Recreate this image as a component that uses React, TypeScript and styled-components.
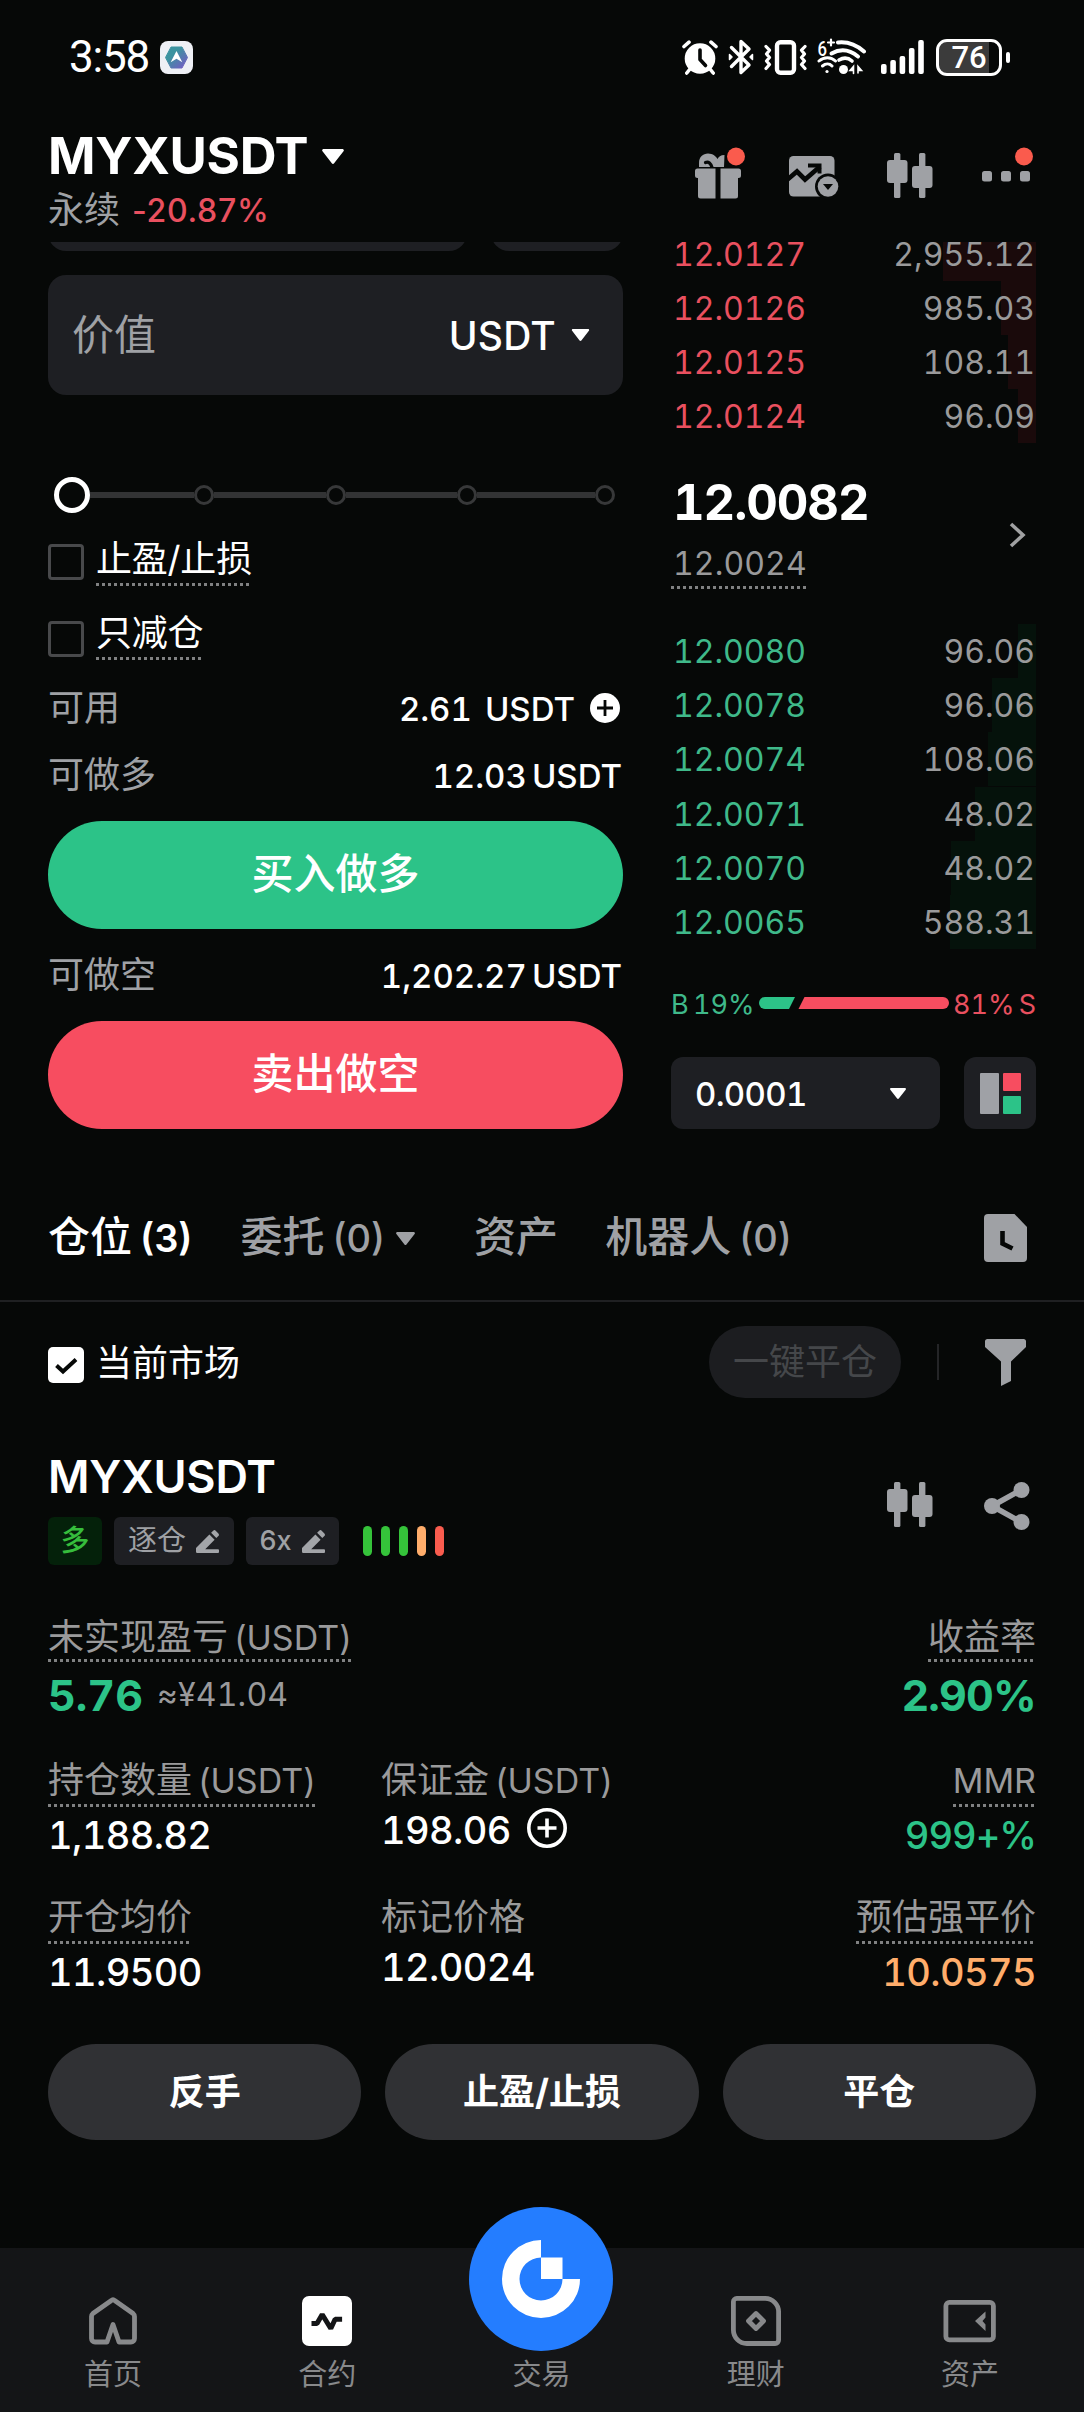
import React from "react";
import styled, { createGlobalStyle } from "styled-components";

const c = {
  bg: "#060807",
  panel: "#1e1f23",
  grey: "#9fa1a5",
  dim: "#9a9a9b",
  red: "#f74d60",
  redText: "#e9505f",
  green: "#2cc388",
  greenText: "#3fb98a",
  white: "#ffffff",
};

const Global = createGlobalStyle`
  * { box-sizing: border-box; }
  html, body { margin: 0; padding: 0; background: ${c.bg}; }
  body {
    font-family: Inter, "Noto Sans CJK SC", sans-serif;
    color: ${c.white};
    font-size: 36px;
    -webkit-font-smoothing: antialiased;
  }
  svg { display: block; flex: none; }
`;

const Screen = styled.main`
  width: 1084px;
  height: 2412px;
  overflow: hidden;
  display: flex;
  flex-direction: column;
  background: ${c.bg};
  white-space: nowrap;
`;

const Txt = styled.span<{ $s?: number; $w?: number; $ls?: number; $c?: string }>`
  font-size: ${(p) => p.$s ?? 36}px;
  font-weight: ${(p) => p.$w ?? 400};
  letter-spacing: ${(p) => p.$ls ?? 0}px;
  color: ${(p) => p.$c ?? "inherit"};
`;

/* ---------- status bar ---------- */
const StatusBar = styled.header`
  height: 114px;
  padding: 0 74px 0 69px;
  display: flex;
  align-items: center;
`;
const Clock = styled.span`
  font: 400 44px/60px Roboto, sans-serif;
  letter-spacing: -1.2px;
  margin-right: 11px;
`;
const StatusIcons = styled.div`
  margin-left: auto;
  display: flex;
  align-items: center;
  gap: 10px;
`;
const Battery = styled.div`
  width: 66px;
  height: 37px;
  border: 3px solid #fff;
  border-radius: 11px;
  background: linear-gradient(90deg, #3b3b3b 0 50px, transparent 50px);
  font: 500 31px/31px Roboto, sans-serif;
  text-align: center;
  margin-left: 2px;
`;
const BatteryTip = styled.i`
  width: 4px;
  height: 11px;
  border-radius: 2px;
  background: #fff;
  margin-left: -6px;
`;

/* ---------- header ---------- */
const Header = styled.div`
  height: 128px;
  padding: 0 48px 0 48px;
  display: flex;
  justify-content: space-between;
`;
const PairBox = styled.div`
  padding-top: 12px;
`;
const PairLine = styled.div`
  display: flex;
  align-items: center;
  height: 60px;
`;
const Pair = styled.h1`
  margin: 0 14px 0 0;
  font-size: 51px;
  line-height: 60px;
  font-weight: 700;
  letter-spacing: -0.3px;
`;
const SubLine = styled.div`
  display: flex;
  gap: 12px;
  height: 48px;
  line-height: 48px;
  color: ${c.grey};
  > span:last-child { padding-top: 1px; }
`;
const HeaderIcons = styled.div`
  display: flex;
  padding-top: 25.5px;
`;
const HeaderIcon = styled.div<{ $inset: number }>`
  width: 96px;
  height: 74px;
  padding-right: ${(p) => p.$inset}px;
  display: flex;
  justify-content: flex-end;
`;
const CandleBox = styled.div`
  padding-top: 13px;
`;

/* ---------- trade area ---------- */
const Trade = styled.section`
  display: grid;
  grid-template-columns: 575px 365px;
  column-gap: 48px;
  padding: 0 48px;
  height: 887px;
`;
const Col = styled.div`
  display: flex;
  flex-direction: column;
`;
const CutRow = styled.div`
  display: flex;
  gap: 24px;
  height: 9px;
  overflow: hidden;
  align-items: flex-end;
`;
const CutBox = styled.div<{ $w: number }>`
  width: ${(p) => p.$w}px;
  height: 60px;
  flex: none;
  border-radius: 18px;
  background: ${c.panel};
`;
const Input = styled.div`
  margin-top: 24px;
  height: 120px;
  border-radius: 18px;
  background: ${c.panel};
  padding: 0 33px 0 24px;
  display: flex;
  align-items: center;
  > span { padding-bottom: 7px; }
`;
const Unit = styled.div`
  margin-left: auto;
  display: flex;
  align-items: center;
  gap: 15px;
`;
const Slider = styled.div`
  margin: 82px 8px 0 6px;
  height: 36px;
  display: flex;
  align-items: center;
`;
const Thumb = styled.div`
  width: 36px;
  height: 36px;
  border: 5px solid #fff;
  border-radius: 50%;
`;
const Stop = styled.div`
  width: 20px;
  height: 20px;
  border: 3px solid #373839;
  border-radius: 50%;
`;
const Seg = styled.div<{ $w: number }>`
  width: ${(p) => p.$w}px;
  height: 6px;
  background: #323334;
`;
const CheckRow = styled.label<{ $mt: number; $drop: number }>`
  margin-top: ${(p) => p.$mt}px;
  height: 46px;
  display: flex;
  gap: 12px;
  letter-spacing: -0.2px;
  > i { margin-top: ${(p) => p.$drop}px; }
`;
const Box = styled.i`
  width: 36px;
  height: 36px;
  border: 3px solid #48494b;
  border-radius: 4px;
`;
const Dotted = styled.span<{ $lh: number; $h?: number }>`
  display: block;
  width: fit-content;
  line-height: ${(p) => p.$lh}px;
  height: ${(p) => p.$h ?? p.$lh + 4}px;
  background: repeating-linear-gradient(90deg, #808182 0 3px, transparent 3px 6px) left bottom / 100% 3px no-repeat;
`;
const Row = styled.div<{ $mt: number }>`
  margin-top: ${(p) => p.$mt}px;
  height: 48px;
  line-height: 48px;
  display: flex;
  justify-content: space-between;
  align-items: center;
  color: ${c.grey};
`;
const Amount = styled.span<{ $gap: number }>`
  display: flex;
  align-items: center;
  gap: ${(p) => p.$gap}px;
  font-size: 33px;
  font-weight: 500;
  color: #fff;
  padding: 2px 1px 0 0;
  > svg { margin: 0 2px 2px 2px; }
`;
const Num = styled.span<{ $ls?: number }>`
  font-variant-numeric: tabular-nums;
  letter-spacing: ${(p) => p.$ls ?? 0}px;
`;
const Action = styled.button<{ $bg: string; $mt: number }>`
  margin-top: ${(p) => p.$mt}px;
  padding: 0;
  height: 108px;
  border: 0;
  border-radius: 54px;
  background: ${(p) => p.$bg};
  color: #fff;
  font: 500 42px/106px Inter, "Noto Sans CJK SC", sans-serif;
  > span { display: block; height: 108px; }
`;

/* ---------- order book ---------- */
const Asks = styled.div`
  height: 201px;
  overflow: hidden;
  display: flex;
  flex-direction: column;
  justify-content: flex-end;
`;
const Bids = styled.div`
  height: 325px;
  display: grid;
  grid-template-rows: repeat(6, 1fr);
`;
const Level = styled.div<{ $side: "ask" | "bid"; $depth: number }>`
  flex: none;
  height: 54px;
  line-height: ${(p) => (p.$side === "ask" ? 56 : 56)}px;
  padding: 0 1px 0 2px;
  display: flex;
  justify-content: space-between;
  font-size: 32px;
  font-variant-numeric: tabular-nums;
  color: ${(p) => (p.$side === "ask" ? c.redText : c.greenText)};
  background: linear-gradient(${(p) => (p.$side === "ask" ? "#1a0a0b, #1a0a0b" : "#05120b, #05120b")}) right / ${(p) => p.$depth}px 100% no-repeat;
  > span:last-child { color: ${c.dim}; }
`;
const Mid = styled.div`
  height: 181px;
  padding-top: 30px;
  display: flex;
  justify-content: space-between;
`;
const Last = styled.div`
  font-size: 49px;
  line-height: 60px;
  height: 60px;
  font-weight: 700;
  letter-spacing: -1.1px;
  padding-left: 2px;
  font-variant-numeric: tabular-nums;
`;
const Mark = styled.div`
  margin-top: 9px;
  color: ${c.dim};
  font-size: 32px;
  letter-spacing: 0.1px;
  font-variant-numeric: tabular-nums;
  > span { padding-left: 2px; }
`;
const MidArrow = styled.div`
  padding: 49px 10px 0 0;
`;
const Ratio = styled.div`
  margin-top: 39px;
  height: 30px;
  line-height: 30px;
  display: flex;
  align-items: center;
  justify-content: space-between;
  font-variant-numeric: tabular-nums;
  > span { padding-top: 3px; word-spacing: -3px; }
`;
const Tools = styled.div`
  margin-top: 39px;
  display: flex;
  justify-content: space-between;
`;
const Step = styled.div`
  width: 269px;
  height: 72px;
  border-radius: 12px;
  background: ${c.panel};
  padding: 0 33px 0 24px;
  display: flex;
  align-items: center;
  justify-content: space-between;
  font-size: 33px;
  font-weight: 500;
  > span { padding-top: 2px; }
`;
const BookMode = styled.div`
  width: 72px;
  height: 72px;
  border-radius: 12px;
  background: ${c.panel};
  padding: 16px;
  display: grid;
  grid-template-columns: 19px 18px;
  grid-template-rows: 18px 18px;
  gap: 5px 4px;
  > i { border-radius: 1px; }
  > i:nth-child(1) { grid-row: span 2; background: #9fa1a6; }
  > i:nth-child(2) { background: ${c.red}; }
  > i:nth-child(3) { background: ${c.green}; }
`;

/* ---------- tabs ---------- */
const Tabs = styled.nav`
  flex: none;
  margin-top: 44px;
  height: 129px;
  padding: 0 57px 0 48px;
  border-bottom: 2px solid #1f2022;
  display: flex;
  align-items: center;
  color: ${c.grey};
`;
const Tab = styled.div<{ $on?: boolean; $gap: number }>`
  display: flex;
  align-items: center;
  gap: 8px;
  font-size: 42px;
  font-weight: 500;
  line-height: 60px;
  margin-right: ${(p) => p.$gap}px;
  color: ${(p) => (p.$on ? "#fff" : c.grey)};
  > span { padding-top: 3px; }
  > svg { margin: 4px 0 0 2px; }
`;
const Push = styled.div`
  margin: 2px 0 0 auto;
`;
const FilterRow = styled.div`
  flex: none;
  margin-top: 24px;
  height: 72px;
  padding: 0 58px 0 48px;
  display: flex;
  align-items: center;
  > span { padding-bottom: 5px; }
`;
const Checked = styled.i`
  width: 36px;
  height: 36px;
  margin: 6px 12px 0 0;
  border-radius: 5px;
  background: #fff;
`;
const CloseAll = styled.div`
  margin-left: auto;
  width: 192px;
  height: 72px;
  border-radius: 36px;
  background: #1c1d20;
  color: #45474a;
  line-height: 72px;
  text-align: center;
`;
const Divider = styled.i`
  width: 2px;
  height: 36px;
  background: #242527;
  margin: 0 46px 0 36px;
`;

/* ---------- position card ---------- */
const CardHead = styled.div`
  flex: none;
  margin-top: 48px;
  padding: 0 54px 0 48px;
  height: 119px;
  display: flex;
  justify-content: space-between;
`;
const Symbol = styled.h2`
  margin: 0 0 10px;
  font-size: 45px;
  line-height: 61px;
  font-weight: 600;
  letter-spacing: -0.2px;
`;
const Tags = styled.div`
  display: flex;
  gap: 12px;
  height: 48px;
  align-items: center;
`;
const Tag = styled.span<{ $w: number; $long?: boolean }>`
  width: ${(p) => p.$w}px;
  height: 48px;
  border-radius: 6px;
  background: ${(p) => (p.$long ? "#04210a" : c.panel)};
  color: ${(p) => (p.$long ? "#36bd3c" : c.grey)};
  font-size: 29px;
  font-weight: ${(p) => (p.$long ? 500 : 400)};
  line-height: 46px;
  display: flex;
  align-items: center;
  justify-content: center;
  gap: 10px;
`;
const Gauge = styled.div`
  display: flex;
  gap: 9px;
  margin-left: 12px;
`;
const Bar = styled.i<{ $c: string }>`
  width: 9px;
  height: 30px;
  border-radius: 5px;
  background: ${(p) => p.$c};
`;
const CardIcons = styled.div`
  display: flex;
  gap: 51px;
  padding-top: 36px;
`;
const Stats = styled.div<{ $mt: number }>`
  flex: none;
  margin-top: ${(p) => p.$mt}px;
  padding: 0 48px;
  height: 102px;
  display: grid;
  grid-template-columns: 333px 1fr auto;
`;
const Stat = styled.div<{ $end?: boolean }>`
  display: flex;
  flex-direction: column;
  align-items: ${(p) => (p.$end ? "flex-end" : "flex-start")};
  color: ${c.dim};
  word-spacing: -4px;
`;
const Plain = styled.span`
  line-height: 47px;
  height: 46px;
`;
const Value = styled.div<{ $mt?: number; $c?: string; $big?: boolean; $ls?: number }>`
  margin-top: ${(p) => p.$mt ?? 4}px;
  height: 48px;
  line-height: 48px;
  font-size: ${(p) => (p.$big ? 43 : 38)}px;
  font-weight: ${(p) => (p.$big ? 700 : 500)};
  font-variant-numeric: tabular-nums;
  letter-spacing: ${(p) => p.$ls ?? (p.$big ? 0 : -0.6)}px;
  color: ${(p) => p.$c ?? "#fff"};
  display: flex;
  align-items: center;
  > span { margin-left: 14px; }
  > svg { margin: -4px 0 0 16px; }
`;
const Buttons = styled.div`
  flex: none;
  margin-top: 48px;
  padding: 0 48px;
  display: grid;
  grid-template-columns: repeat(3, 1fr);
  gap: 24px;
`;
const Pill = styled.button`
  height: 96px;
  border: 0;
  border-radius: 48px;
  background: #303134;
  color: #fff;
  font: 700 36px/94px Inter, "Noto Sans CJK SC", sans-serif;
`;

/* ---------- bottom navigation ---------- */
const Nav = styled.nav`
  margin-top: auto;
  flex: none;
  height: 164px;
  padding: 0 7px 0 6px;
  background: #141517;
  display: grid;
  grid-template-columns: repeat(5, 1fr);
  grid-template-rows: 164px;
`;
const NavItem = styled.div`
  height: 164px;
  display: flex;
  flex-direction: column;
  align-items: center;
  justify-content: flex-end;
  color: #88898b;
  font-size: 29px;
  line-height: 40px;
  padding-bottom: 17px;
  > svg { margin-bottom: 9px; }
`;
const TradeItem = styled(NavItem)`
  > svg { margin-bottom: 4px; }
`;

/* ---------- drawings ---------- */
const Caret = ({ w, h, fill = "#fff" }: { w: number; h: number; fill?: string }) => (
  <svg width={w} height={h} viewBox="0 0 22 15">
    <path d="M1.6 0h18.8c1.2 0 1.9 1.4 1.1 2.3l-9.4 12c-.6.8-1.7.8-2.3 0L.5 2.3C-.3 1.4.4 0 1.6 0z" fill={fill} />
  </svg>
);

const Candles = () => (
  <svg width="46" height="45" viewBox="0 0 46 45" fill="#9fa1a5">
    <rect x="7" y="0" width="6.4" height="45" rx="1.5" />
    <rect x="0" y="7" width="20.5" height="23" rx="3" />
    <rect x="32" y="0" width="6.4" height="45" rx="1.5" />
    <rect x="25" y="13" width="20.5" height="22" rx="3" />
  </svg>
);

const Pencil = () => (
  <svg width="24" height="23" viewBox="0 0 24 23" fill="#a3a5a9">
    <path d="M17.2.7a1.8 1.8 0 0 1 2.5 0l2.7 2.7a1.8 1.8 0 0 1 0 2.5L20.3 8l-5.2-5.2zM13.4 4.5l5.2 5.2-9.4 9.5H22a1 1 0 0 1 1 1V22a1 1 0 0 1-1 1H1.2A1.2 1.2 0 0 1 0 21.800V18z" />
  </svg>
);

const AppBadge = () => (
  <svg width="33" height="33" viewBox="0 0 33 33">
    <defs>
      <linearGradient id="badge" x1="0" y1="0" x2="1" y2="1">
        <stop offset="0.35" stopColor="#3c93a0" />
        <stop offset="1" stopColor="#7a55c8" />
      </linearGradient>
    </defs>
    <rect width="33" height="33" rx="8" fill="#eef0f5" />
    <path d="M11 6h11l5.500 10.500L22 27H11L5.500 16.500z" fill="url(#badge)" stroke="url(#badge)" strokeLinejoin="round" />
    <path d="M16.500 10l5.800 11.200-5.800-3.400-5.800 3.400z" fill="#fff" />
  </svg>
);

const Alarm = () => (
  <svg width="36" height="35" viewBox="0 0 36 35">
    <g stroke="#fff" strokeWidth="3.6" strokeLinecap="round">
      <path d="M2 6.500L7 2.200M34 6.500L29 2.200M8 29l-3.200 4M28 29l3.200 4" />
    </g>
    <circle cx="18" cy="18.500" r="15.300" fill="#fff" />
    <path d="M18 10v9.500l5.500 6" fill="none" stroke="#060807" strokeWidth="3.600" strokeLinecap="round" strokeLinejoin="round" />
  </svg>
);

const Bluetooth = () => (
  <svg width="26" height="36" viewBox="0 0 26 36" fill="none" stroke="#fff" strokeWidth="3.400" strokeLinejoin="round" strokeLinecap="round">
    <path d="M3.500 8.500L21 26l-8 7.500v-31L21 10 3.500 27.500" />
    <path d="M1.500 15.500l2.500 2.500-2.500 2.500zM24.500 15.500L22 18l2.500 2.500z" fill="#fff" strokeWidth="1.500" />
  </svg>
);

const Vibrate = () => (
  <svg width="43" height="35" viewBox="0 0 43 35" fill="none" stroke="#fff" strokeWidth="3.200" strokeLinejoin="round" strokeLinecap="round">
    <rect x="13" y="2.300" width="17" height="30.400" rx="3.500" strokeWidth="4.400" />
    <path d="M2 6.500l3.500 3.700L2.500 14 5.500 17.500 2.500 21 5.500 24.500 2 28.500M41 6.500l-3.500 3.700 3 3.800-3 3.500 3 3.500-3 3.500 3.500 4" />
  </svg>
);

const WifiBox = styled.div`
  margin-right: 5px;
`;
const Wifi = () => (
  <svg width="49" height="38" viewBox="0 0 49 38" fill="none" stroke="#fff" strokeLinecap="round">
    <text x="0.500" y="17.500" fontFamily="Roboto" fontSize="20" fontWeight="500" fill="#fff" stroke="none" textLength="9.500" lengthAdjust="spacingAndGlyphs">6</text>
    <path d="M14 1.500v6M11 4.500h6" strokeWidth="2.200" />
    <path d="M21 4.500c9-1 18 2 26 9" strokeWidth="4" />
    <path d="M14.500 15.500c9-5 18-4 26.500 3" strokeWidth="4" />
    <path d="M22 22c5-3 9-2.500 13 1" strokeWidth="3.600" />
    <path d="M2 23c5-4.500 12-4.500 16.500 0M5.500 28c3-2.600 7-2.600 9.500 0" strokeWidth="3" />
    <circle cx="10" cy="33.500" r="1.600" fill="#fff" stroke="none" />
    <circle cx="26.500" cy="31.500" r="4.500" fill="#fff" stroke="none" />
    <path d="M33 32.500h3.500v-4l-3.500 4zm3.500-3v6M41 35v-6.500l3.500 4H41" fill="#fff" strokeWidth="1.600" />
  </svg>
);

const Signal = () => (
  <svg width="43" height="34" viewBox="0 0 43 34" fill="#fff">
    {[10, 14, 18, 26, 34].map((h, i) => (
      <rect key={h} x={i * 9.300} y={34 - h} width="5.600" height={h} rx="2" />
    ))}
  </svg>
);

const Gift = () => (
  <svg width="50" height="60" viewBox="0 0 50 60" fill="#9fa1a5">
    <path d="M4 27v-4c0-6 4-9.500 9-9.500 5 0 8 3 9.500 5.500 1-2 3-4 7-4l-.5 12z" />
    <path d="M10.500 22.500c3-1.500 5.500 1 6.500 5" fill="none" stroke={c.bg} strokeWidth="3.200" strokeLinecap="round" />
    <path d="M2.500 28.500H20.500V58.500H5.500a2.500 2.500 0 0 1-2.500-2.500V38h-.5A2.500 2.500 0 0 1 0 35.500V31a2.500 2.500 0 0 1 2.500-2.500z" />
    <path d="M25.500 28.500H43.500a2.500 2.500 0 0 1 2.500 2.500v4.500a2.500 2.500 0 0 1-2.500 2.500H43v18a2.500 2.500 0 0 1-2.500 2.500H25.500z" />
    <circle cx="41" cy="16.500" r="9" fill="#fa5b4d" />
  </svg>
);

const ChartPic = () => (
  <svg width="50" height="60" viewBox="0 0 50 60">
    <rect x="0" y="16" width="45.500" height="40.500" rx="4.500" fill="#9fa1a5" />
    <path d="M-2 40L8 31.500l8 8L31 26.500" fill="none" stroke={c.bg} strokeWidth="4.600" />
    <path d="M19 25.500h11.500v8" fill="none" stroke={c.bg} strokeWidth="4" />
    <circle cx="39" cy="46.500" r="13" fill={c.bg} />
    <circle cx="39" cy="46.500" r="10.300" fill="#9fa1a5" />
    <path d="M34 44h10l-5 6z" fill={c.bg} />
  </svg>
);

const More = () => (
  <svg width="54" height="60" viewBox="0 0 54 60" fill="#9fa1a5">
    <rect x="0" y="31" width="10" height="10.500" rx="2.500" />
    <rect x="19" y="31" width="10" height="10.500" rx="2.500" />
    <rect x="38" y="31" width="10" height="10.500" rx="2.500" />
    <circle cx="42" cy="16.500" r="9" fill="#fa5b4d" />
  </svg>
);

const PlusDisc = () => (
  <svg width="30" height="30" viewBox="0 0 30 30">
    <circle cx="15" cy="15" r="15" fill="#fff" />
    <path d="M15 7v16M7 15h16" stroke={c.bg} strokeWidth="2.800" />
  </svg>
);

const PlusRing = () => (
  <svg width="40" height="40" viewBox="0 0 40 40" fill="none" stroke="#fff" strokeWidth="3.600">
    <circle cx="20" cy="20" r="18.200" />
    <path d="M20 10.500v19M10.500 20h19" />
  </svg>
);

const RatioBar = () => (
  <svg width="190" height="12" viewBox="0 0 190 12">
    <path d="M6 0h30l-6 12H6A6 6 0 0 1 6 0z" fill={c.green} />
    <path d="M45.500 0H184a6 6 0 0 1 0 12H39.500z" fill={c.red} />
  </svg>
);

const History = () => (
  <svg width="43" height="48" viewBox="0 0 43 48">
    <path d="M4 0h26.500L43 13v31a4 4 0 0 1-4 4H4a4 4 0 0 1-4-4V4a4 4 0 0 1 4-4z" fill="#9fa1a5" />
    <path d="M18.500 17v12.500l10 5" fill="none" stroke={c.bg} strokeWidth="4.600" />
  </svg>
);

const Funnel = () => (
  <svg width="41" height="47" viewBox="0 0 41 47" fill="#9fa1a5">
    <path d="M2.500 0h36A2.500 2.500 0 0 1 41 2.500V8L26 22.500V42l-10 5V22.500L0 8V2.500A2.500 2.500 0 0 1 2.500 0z" />
  </svg>
);

const Share = () => (
  <svg width="46" height="48" viewBox="0 0 46 48" fill="#9fa1a5">
    <path d="M37 8L8 24l29 16" fill="none" stroke="#9fa1a5" strokeWidth="5.600" />
    <circle cx="37.500" cy="8" r="8" />
    <circle cx="8" cy="24" r="8" />
    <circle cx="37.500" cy="40" r="8" />
  </svg>
);

const Home = () => (
  <svg width="50" height="50" viewBox="0 0 50 50" fill="none" stroke="#88898b" strokeWidth="4.800" strokeLinejoin="round">
    <path d="M25 28.500L31 46H43a3.500 3.500 0 0 0 3.500-3.500V20.500a4 4 0 0 0-1.400-3L27 4.700a3 3 0 0 0-4 0L4.900 17.500a4 4 0 0 0-1.400 3v22A3.500 3.500 0 0 0 7 46H19z" />
  </svg>
);

const Futures = () => (
  <svg width="50" height="50" viewBox="0 0 50 50">
    <rect width="50" height="50" rx="7" fill="#fff" />
    <path d="M9.500 27.500h5.500l5.200-9 8.600 14 4.300-9.200h7" fill="none" stroke="#141517" strokeWidth="5" strokeLinejoin="bevel" />
  </svg>
);

const Logo = () => (
  <svg width="144" height="144" viewBox="0 0 144 144">
    <circle cx="72" cy="72" r="72" fill="#247dff" />
    <path d="M72 33A39 39 0 1 0 111 72H93.500A21.500 21.500 0 1 1 72 50.500z" fill="#fff" />
    <rect x="72" y="50.500" width="21.500" height="21.500" fill="#fff" />
  </svg>
);

const Earn = () => (
  <svg width="50" height="50" viewBox="0 0 50 50" fill="none" stroke="#88898b" strokeWidth="4.800">
    <path d="M6 2.400H34A13.500 13.500 0 0 1 47.600 16V44a3.500 3.500 0 0 1-3.500 3.500H16A13.500 13.500 0 0 1 2.400 34V6A3.500 3.500 0 0 1 6 2.400z" />
    <path d="M25 17.500l7.500 7.500-7.500 7.500-7.500-7.500z" strokeLinejoin="round" />
  </svg>
);

const Wallet = () => (
  <svg width="53" height="50" viewBox="0 0 53 50">
    <rect x="2.900" y="6.400" width="47.500" height="37.500" rx="3.500" fill="none" stroke="#88898b" strokeWidth="4.800" />
    <path d="M42.500 15.500v6l-3 3.500 3 3.500v6.500L32 25z" fill="#88898b" />
  </svg>
);

/* ---------- data ---------- */
const asks: [string, string, number][] = [
  ["12.0127", "2,955.12", 93],
  ["12.0126", "985.03", 35],
  ["12.0125", "108.11", 28],
  ["12.0124", "96.09", 18],
];
const bids: [string, string, number][] = [
  ["12.0080", "96.06", 18],
  ["12.0078", "96.06", 44],
  ["12.0074", "108.06", 48],
  ["12.0071", "48.02", 61],
  ["12.0070", "48.02", 85],
  ["12.0065", "588.31", 86],
];

const Usdt = () => <Txt $s={34}>(USDT)</Txt>;

export default function App() {
  return (
    <Screen>
      <Global />
      <StatusBar>
        <Clock>3:58</Clock>
        <AppBadge />
        <StatusIcons>
          <Alarm />
          <Bluetooth />
          <Vibrate />
          <WifiBox><Wifi /></WifiBox>
          <Signal />
          <Battery>76</Battery>
          <BatteryTip />
        </StatusIcons>
      </StatusBar>

      <Header>
        <PairBox>
          <PairLine>
            <Pair>MYXUSDT</Pair>
            <Caret w={22} h={15} />
          </PairLine>
          <SubLine>
            <span>永续</span>
            <Txt $s={32} $w={500} $ls={0.7} $c={c.redText}>-20.87%</Txt>
          </SubLine>
        </PairBox>
        <HeaderIcons>
          <HeaderIcon $inset={3}><Gift /></HeaderIcon>
          <HeaderIcon $inset={5}><ChartPic /></HeaderIcon>
          <HeaderIcon $inset={7}><CandleBox><Candles /></CandleBox></HeaderIcon>
          <HeaderIcon $inset={0}><More /></HeaderIcon>
        </HeaderIcons>
      </Header>

      <Trade>
        <Col>
          <CutRow><CutBox $w={419} /><CutBox $w={132} /></CutRow>
          <Input>
            <Txt $s={42} $c={c.grey}>价值</Txt>
            <Unit>
              <Txt $s={39} $w={500} $ls={0.2}>USDT</Txt>
              <Caret w={19} h={12} />
            </Unit>
          </Input>
          <Slider>
            <Thumb />
            <Seg $w={104} /><Stop /><Seg $w={112} /><Stop /><Seg $w={111} /><Stop /><Seg $w={118} /><Stop />
          </Slider>
          <CheckRow $mt={27} $drop={4}><Box /><Dotted $lh={39} $h={46}>止盈/止损</Dotted></CheckRow>
          <CheckRow $mt={28} $drop={7}><Box /><Dotted $lh={39} $h={46}>只减仓</Dotted></CheckRow>
          <Row $mt={24}>
            <span>可用</span>
            <Amount $gap={13}><Num>2.61</Num><span>USDT</span><PlusDisc /></Amount>
          </Row>
          <Row $mt={19}>
            <span>可做多</span>
            <Amount $gap={5}><Num>12.03</Num><span>USDT</span></Amount>
          </Row>
          <Action $bg={c.green} $mt={22}><span>买入做多</span></Action>
          <Row $mt={22}>
            <span>可做空</span>
            <Amount $gap={5}><Num>1,202.27</Num><span>USDT</span></Amount>
          </Row>
          <Action $bg={c.red} $mt={22}><span>卖出做空</span></Action>
        </Col>

        <Col>
          <Asks>
            {asks.map(([p, q, d]) => (
              <Level key={p} $side="ask" $depth={d}><span>{p}</span><span>{q}</span></Level>
            ))}
          </Asks>
          <Mid>
            <div>
              <Last>12.0082</Last>
              <Mark><Dotted $lh={43}>12.0024</Dotted></Mark>
            </div>
            <MidArrow>
              <svg width="17" height="26" viewBox="0 0 17 26" fill="none" stroke="#a0a1a2" strokeWidth="3.600">
                <path d="M2 2l12 11L2 24" />
              </svg>
            </MidArrow>
          </Mid>
          <Bids>
            {bids.map(([p, q, d]) => (
              <Level key={p} $side="bid" $depth={d}><span>{p}</span><span>{q}</span></Level>
            ))}
          </Bids>
          <Ratio>
            <Txt $s={27} $c={c.greenText}>B 19%</Txt>
            <RatioBar />
            <Txt $s={27} $c={c.redText}>81% S</Txt>
          </Ratio>
          <Tools>
            <Step><Num $ls={-0.7}>0.0001</Num><Caret w={18} h={11} /></Step>
            <BookMode><i /><i /><i /></BookMode>
          </Tools>
        </Col>
      </Trade>

      <Tabs>
        <Tab $on $gap={48}>仓位<Txt $s={38} $w={600}>(3)</Txt></Tab>
        <Tab $gap={58}>委托<Txt $s={38} $w={500}>(0)</Txt><Caret w={21} h={13} fill="#9fa1a5" /></Tab>
        <Tab $gap={47}>资产</Tab>
        <Tab $gap={0}>机器人<Txt $s={38} $w={500}>(0)</Txt></Tab>
        <Push><History /></Push>
      </Tabs>

      <FilterRow>
        <Checked>
          <svg width="36" height="36" viewBox="0 0 36 36" fill="none" stroke={c.bg} strokeWidth="4">
            <path d="M8.500 18.500l6.500 6 13-12" />
          </svg>
        </Checked>
        <span>当前市场</span>
        <CloseAll>一键平仓</CloseAll>
        <Divider />
        <Funnel />
      </FilterRow>

      <CardHead>
        <div>
          <Symbol>MYXUSDT</Symbol>
          <Tags>
            <Tag $w={54} $long>多</Tag>
            <Tag $w={120}>逐仓<Pencil /></Tag>
            <Tag $w={93}><Txt $s={27} $w={500}>6x</Txt><Pencil /></Tag>
            <Gauge>
              {["#35c33a", "#35c33a", "#35c33a", "#ffad6b", "#f95c4e"].map((col, i) => <Bar key={i} $c={col} />)}
            </Gauge>
          </Tags>
        </div>
        <CardIcons><Candles /><Share /></CardIcons>
      </CardHead>

      <Stats $mt={51}>
        <Stat>
          <Dotted $lh={43} $h={46}>未实现盈亏 <Usdt /></Dotted>
          <Value $big $mt={9} $c={c.green}>5.76<Txt $s={32} $ls={0.2} $c={c.dim}>≈¥41.04</Txt></Value>
        </Stat>
        <Stat />
        <Stat $end>
          <Dotted $lh={43} $h={46}>收益率</Dotted>
          <Value $big $mt={9} $ls={-0.8} $c={c.green}>2.90%</Value>
        </Stat>
      </Stats>
      <Stats $mt={39}>
        <Stat>
          <Dotted $lh={47} $h={50}>持仓数量 <Usdt /></Dotted>
          <Value>1,188.82</Value>
        </Stat>
        <Stat>
          <Plain>保证金 <Usdt /></Plain>
          <Value $mt={3}>198.06<PlusRing /></Value>
        </Stat>
        <Stat $end>
          <Dotted $lh={47} $h={50}><Txt $s={34}>MMR</Txt></Dotted>
          <Value $ls={-1} $c={c.green}>999+%</Value>
        </Stat>
      </Stats>
      <Stats $mt={35}>
        <Stat>
          <Dotted $lh={46}>开仓均价</Dotted>
          <Value>11.9500</Value>
        </Stat>
        <Stat>
          <Plain>标记价格</Plain>
          <Value $mt={3}>12.0024</Value>
        </Stat>
        <Stat $end>
          <Dotted $lh={46}>预估强平价</Dotted>
          <Value $c="#ffad6b">10.0575</Value>
        </Stat>
      </Stats>

      <Buttons>
        <Pill>反手</Pill>
        <Pill>止盈/止损</Pill>
        <Pill>平仓</Pill>
      </Buttons>

      <Nav>
        <NavItem><Home />首页</NavItem>
        <NavItem><Futures />合约</NavItem>
        <TradeItem><Logo />交易</TradeItem>
        <NavItem><Earn />理财</NavItem>
        <NavItem><Wallet />资产</NavItem>
      </Nav>
    </Screen>
  );
}
